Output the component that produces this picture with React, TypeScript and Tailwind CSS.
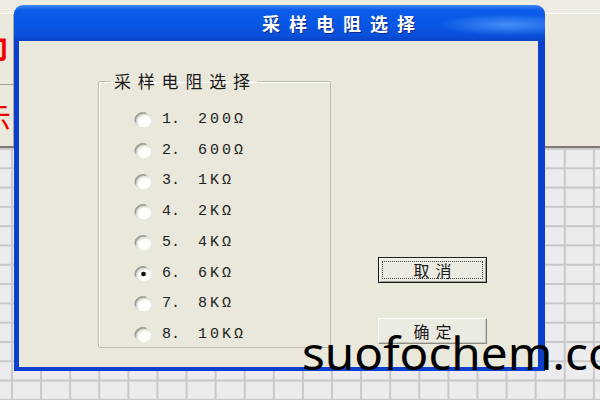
import React from "react";

const options = ["200Ω", "600Ω", "1KΩ", "2KΩ", "4KΩ", "6KΩ", "8KΩ", "10KΩ"];
const selected = 5;

const cjk = "font-['SimSun','Noto_Sans_CJK_SC',sans-serif]";

function Radio({ checked, id }: { checked: boolean; id: string }) {
  return (
    <svg width="18" height="16" viewBox="0 0 18 16" className="shrink-0">
      <defs>
        <radialGradient id={id} cx="62%" cy="62%" r="60%">
          <stop offset="0%" stopColor="#ffffff" />
          <stop offset="60%" stopColor="#fdfdfb" />
          <stop offset="88%" stopColor="#dad9d0" />
          <stop offset="100%" stopColor="#aeada3" />
        </radialGradient>
      </defs>
      <ellipse cx="9" cy="8" rx="8.4" ry="7.4" fill={`url(#${id})`} />
      <path d="M1.8 10 A8 7 0 0 1 12 1.2" fill="none" stroke="#a09f96" strokeWidth="1.5" />
      {checked && <ellipse cx="9.5" cy="8" rx="2.4" ry="2.2" fill="#111" />}
    </svg>
  );
}

export default function App() {
  return (
    <div className="relative w-[600px] h-[400px] overflow-hidden bg-[#ebe9dc]">
      {/* desktop behind the dialog */}
      <div className="flex flex-col h-full">
        <div className="h-[14px] bg-[#eeece2] border-b border-white" />
        <div className="h-[134px] flex border-b-2 border-[#7c7b74]">
          <div className="w-[14px] flex flex-col border-r border-[#a8a79f]">
            <div className="h-[71px] border-b border-[#a09f97] overflow-hidden flex justify-end items-center pr-[5px]">
              <span className="shrink-0 text-[#f20000] font-bold text-[30px] leading-none font-['Noto_Sans_CJK_SC',sans-serif]">印</span>
            </div>
            <div className="flex-1 overflow-hidden flex justify-end items-center pr-[2px]">
              <span className="shrink-0 text-[#f20000] text-[30px] leading-none font-['Noto_Sans_CJK_SC',sans-serif]">示</span>
            </div>
          </div>
          <div className="flex-1" />
        </div>
        <div className="flex-1 bg-[#ececef] bg-[linear-gradient(to_right,#c8c8cb_2px,transparent_2px),linear-gradient(to_bottom,#c8c8cb_2px,transparent_2px)] bg-[size:29.1px_19.3px] bg-[position:11px_0px]" />
      </div>

      {/* dialog window */}
      <div className="absolute left-[14px] top-[5px] w-[531px] h-[366px] flex flex-col rounded-t-[9px] overflow-hidden">
        <div className="h-[36px] shrink-0 flex items-center pl-[248px] bg-[radial-gradient(ellipse_70px_11px_at_93%_55%,#4590f6,transparent),linear-gradient(to_bottom,#3d8af7_0%,#0d5ce9_14%,#0856e4_55%,#0a50da_85%,#0843c6_100%)]">
          <span className={`text-white font-bold text-[18px] tracking-[9px] leading-none ${cjk} [text-shadow:1px_1px_0_#0a2a8a]`}>
            采样电阻选择
          </span>
        </div>
        <div className="flex-1 flex border-l-[5px] border-r-[7px] border-b-[4px] border-[#0a3fcd] bg-[#e9e8da]">
          <fieldset className="ml-[79px] mt-[31px] w-[233px] h-[276px] border border-[#bdbbac] rounded-[2px] shadow-[inset_1px_1px_0_#fff]">
            <legend className={`ml-[12px] pl-[3px] pr-0 text-[17px] leading-[18px] tracking-[6.8px] text-[#1a1a1a] ${cjk}`}>
              采样电阻选择
            </legend>
            <div className="flex flex-col pt-[15px] pl-[35px]">
              {options.map((v, i) => (
                <div key={v} className="h-[30.7px] flex items-center">
                  <Radio checked={i === selected} id={`rb${i}`} />
                  <span className="w-[46px] pl-[10px] text-[15px] text-[#222] font-['Liberation_Mono',monospace]">
                    {i + 1}.
                  </span>
                  <span className="text-[15px] tracking-[3px] text-[#222] font-['Liberation_Mono',monospace]">
                    {v}
                  </span>
                </div>
              ))}
            </div>
          </fieldset>

          <div className="ml-[47px] mt-[216px] flex flex-col gap-[35px]">
            <div className="w-[109px] h-[26px] border border-[#1b1b1b] bg-[#ecebe2] p-[3px] shadow-[inset_1px_1px_0_#fff,inset_-1px_-1px_0_#9d9c93]">
              <div className={`h-full border border-dotted border-[#444] flex items-center justify-center pl-[6px] text-[16px] tracking-[6px] text-[#1a1a1a] ${cjk}`}>
                取消
              </div>
            </div>
            <div className={`w-[109px] h-[26px] bg-[#ecebe2] border-t border-l border-white border-r border-b border-r-[#8c8b83] border-b-[#8c8b83] shadow-[inset_-1px_-1px_0_#c9c8be] flex items-center justify-center pl-[6px] text-[16px] tracking-[6px] text-[#1a1a1a] ${cjk}`}>
              确定
            </div>
          </div>
        </div>
      </div>

      {/* watermark */}
      <div className="absolute left-[302px] top-[330px] text-[45px] leading-none text-black font-['Noto_Sans',sans-serif] whitespace-nowrap scale-x-[1.06] origin-left">
        suofochem.co
      </div>
    </div>
  );
}
